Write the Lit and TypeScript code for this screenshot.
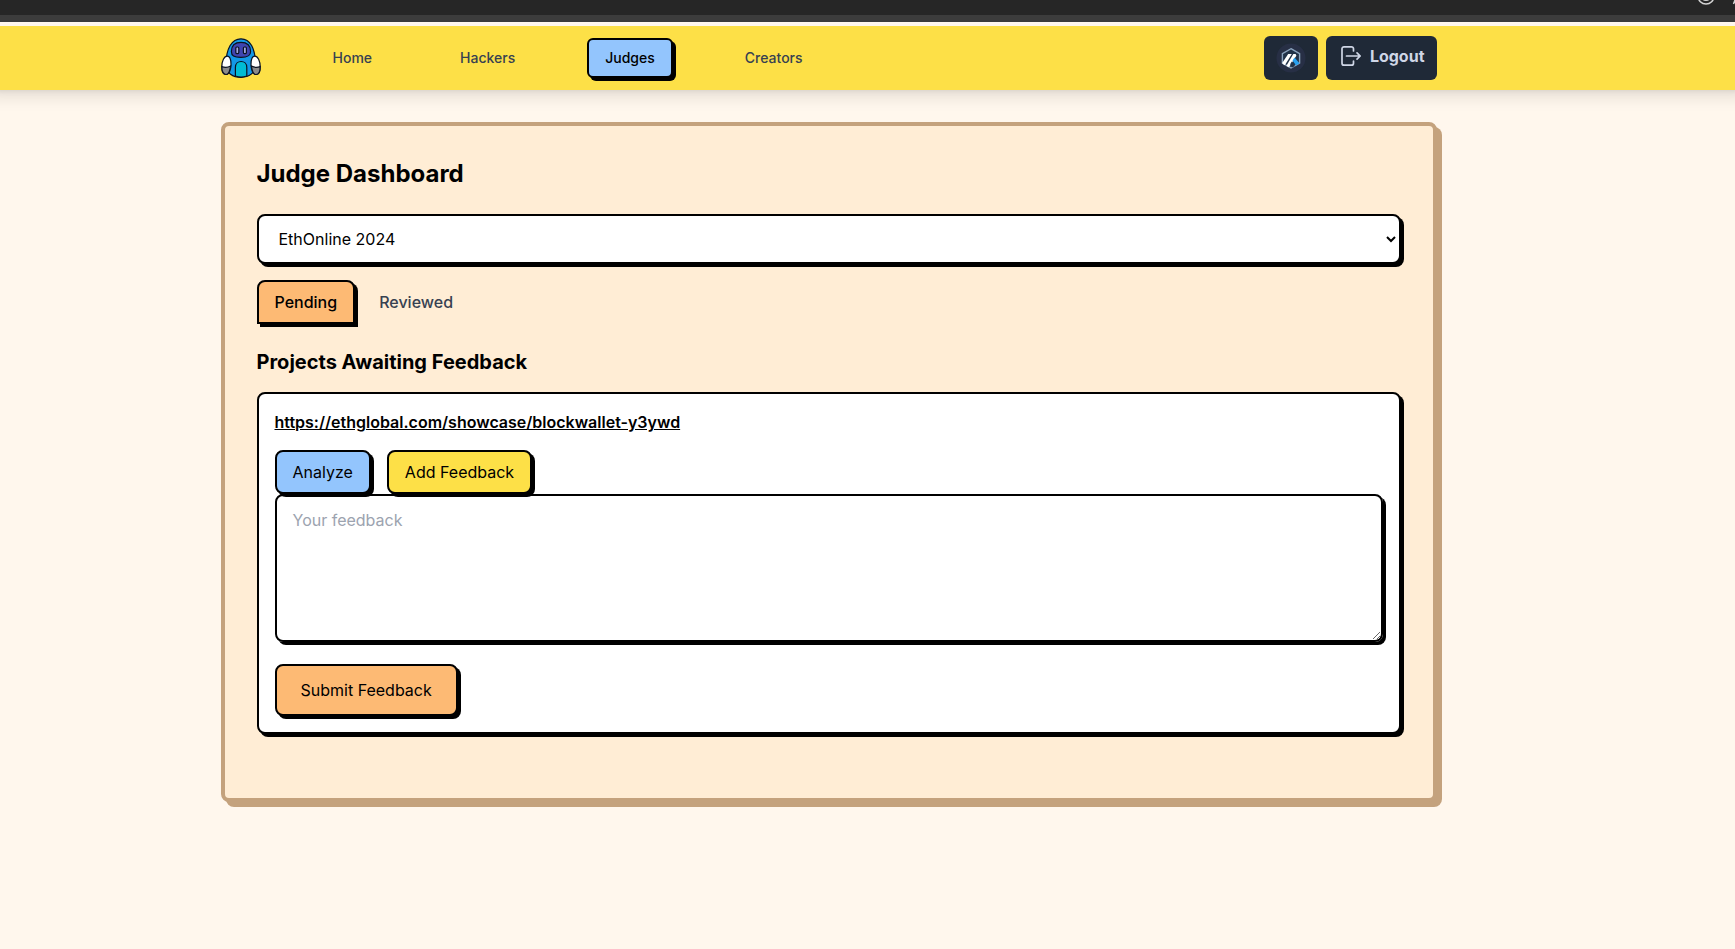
import { LitElement, html, css } from "lit";
import { customElement, state } from "lit/decorators.js";

type Tab = "pending" | "reviewed";

@customElement("site-header")
class SiteHeader extends LitElement {
  static styles = css`
    :host { display: block; }
    .bar {
      background: #fde047;
      box-shadow: 0 -5px 15px 12px rgba(0, 0, 0, 0.1), 0 -8px 6px 8px rgba(0, 0, 0, 0.1);
      clip-path: inset(0 0 -40px 0);
      padding-right: 78px;
    }
    .inner {
      box-sizing: border-box;
      max-width: 1216px;
      min-height: 64px;
      margin: 0 auto;
      display: flex;
      align-items: center;
      justify-content: space-between;
    }
    .left { display: flex; align-items: center; gap: 56px; }
    .logo { display: block; width: 40px; height: 40px; }
    .logo svg { display: block; }
    .link {
      box-sizing: border-box;
      height: 40px;
      display: flex;
      align-items: center;
      padding: 0 16px;
      border-radius: 6px;
      color: #374151;
      font-size: 14px;
      line-height: 20px;
      font-weight: 500;
      text-decoration: none;
    }
    .active {
      background: #93c5fd;
      border: 2px solid #000;
      box-shadow: 3px 3px 0 #000;
      color: #000;
    }
    .right { display: flex; gap: 8px; }
    .dark {
      height: 44px;
      display: flex;
      align-items: center;
      border: 0;
      border-radius: 6px;
      background: #1f2937;
      color: #cfd6e6;
      font: 700 16px/24px Inter, sans-serif;
      cursor: pointer;
    }
    .chain { padding: 0 12px; }
    .logout { padding: 0 12px 4px; gap: 8px; }
  `;

  render() {
    return html`
      <header class="bar">
        <div class="inner">
          <nav class="left">
            <a class="logo" href="#" aria-label="Start">
              <svg width="40" height="40" viewBox="0 0 40 40" stroke="#0b1220" stroke-width="1.2">
                <path d="M5 27C5 10 11 .8 20 .8S34.500 10 34.500 27C34.500 35 28 39.300 20 39.300S5 35 5 27Z" fill="#1398e6" />
                <path d="M14.400 38v-8.500c0-8 11.400-8 11.400 0V38c-3.600 1.300-7.800 1.300-11.400 0Z" fill="#00bcd4" />
                <path d="M10.400 13.500c0-6 3.600-9.200 9.600-9.200s9.600 3.200 9.600 9.200c0 4.400-2.600 5.900-9.600 5.900s-9.600-1.500-9.600-5.900Z" fill="#3f44b0" />
                <rect x="14.800" y="9" width="3" height="6.600" rx="1" fill="#a3a6e4" />
                <rect x="22.400" y="9" width="3" height="6.600" rx="1" fill="#a3a6e4" />
                <path d="M.8 29c0-6 2.400-10.800 5.400-10.800S10 22 10 26.500c0 5-2 10-5 10S.8 33.500.8 29Z" fill="#fff" />
                <path d="M39.200 29c0-6-2.400-10.800-5.400-10.800S30 22 30 26.500c0 5 2 10 5 10s4.200-3 4.200-7.500Z" fill="#fff" />
                <path d="M.8 28.500c3 1.200 6 1 8.800-.5-.6 4.500-2 8.500-4.600 8.500S.8 33.500.8 28.500Z" fill="#8b8b8b" />
                <path d="M39.200 28.500c-3 1.200-6 1-8.800-.5.6 4.500 2 8.500 4.600 8.500s4.200-3 4.200-8Z" fill="#8b8b8b" />
              </svg>
            </a>
            <a class="link" href="#">Home</a>
            <a class="link" href="#">Hackers</a>
            <a class="link active" href="#" aria-current="page">Judges</a>
            <a class="link" href="#">Creators</a>
          </nav>
          <div class="right">
            <button class="dark chain" aria-label="Arbitrum network">
              <svg width="30" height="30" viewBox="0 0 30 30">
                <circle cx="15" cy="15" r="14.500" fill="#272f45" />
                <path d="M15 5.700l8.600 4.900v9.400L15 24.900 6.400 20v-9.400Z" fill="#213147" stroke="#8ba3bd" stroke-width="1.400" />
                <path d="M6.500 19.500L12.200 11h3.600L8.800 22.200l-2.300-1.500Z" fill="#fff" />
                <path d="M10.300 23L17.300 11h2.300l.8 1.700L13 24.300Z" fill="#fff" />
                <path d="M16.500 17.500l2-3 5 5.700-3.400 2.200Z" fill="#28a0f0" />
                <path d="M15.700 18.500l3.300 4.600-3 1.500-1.800-3.300Z" fill="#213147" />
              </svg>
            </button>
            <button class="dark logout">
              <svg width="24" height="24" viewBox="0 0 24 24" fill="none" stroke="currentColor" stroke-width="1.700" stroke-linecap="round" stroke-linejoin="round">
                <path d="M15.500 7V4.800a2 2 0 0 0-2-2H6a2 2 0 0 0-2 2v14.400a2 2 0 0 0 2 2h7.500a2 2 0 0 0 2-2V17" />
                <path d="M8.500 12H22M19 8.800l3.200 3.200L19 15.200" />
              </svg>
              Logout
            </button>
          </div>
        </div>
      </header>
    `;
  }
}

@customElement("app-root")
class AppRoot extends LitElement {
  static styles = css`
    :host {
      display: block;
      min-height: 100vh;
      background: #fff7ed;
      color: #000;
      font: 400 16px/24px Inter, sans-serif;
    }
    .chrome {
      box-sizing: border-box;
      height: 22px;
      overflow: hidden;
      background: #262626;
      border-bottom: 7px solid #3c3c3c;
      display: flex;
      justify-content: flex-end;
    }
    .chrome svg { display: block; }
    .strip { height: 4px; background: #fff7ed; }
    .page { padding: 32px 78px 32px 0; }
    .panel {
      box-sizing: border-box;
      max-width: 1216px;
      margin: 0 auto;
      padding: 32px 32px 64px;
      background: #ffedd5;
      border: 4px solid #c4a27d;
      border-radius: 8px;
      box-shadow: 5px 5px 0 #c4a27d;
    }
    h1 { margin: 0 0 24px; font-size: 24px; line-height: 32px; font-weight: 700; }
    h2 { margin: 24px 0 16px; font-size: 20px; line-height: 28px; font-weight: 700; }
    .boxed {
      box-sizing: border-box;
      border: 2px solid #000;
      border-radius: 8px;
      box-shadow: 3px 3px 0 #000;
      background: #fff;
      color: #000;
      font: inherit;
    }
    .event { display: block; width: 100%; height: 50px; padding: 0 0 0 16px; }
    .tabs { display: flex; gap: 8px; margin-top: 16px; }
    .tab {
      height: 44px;
      padding: 0 16px;
      border: 0;
      background: none;
      color: #374151;
      font: inherit;
      font-weight: 500;
      cursor: pointer;
    }
    .tab.on {
      border: 2px solid #000;
      border-radius: 8px 8px 0 0;
      background: #fdba74;
      box-shadow: 3px 3px 0 #000;
      color: #000;
    }
    .card { padding: 16px; }
    .project { display: inline-block; color: #000; font-weight: 600; text-decoration: underline; }
    .actions { display: flex; gap: 16px; margin-top: 16px; }
    .small { height: 44px; padding: 0 16px; cursor: pointer; }
    .blue { background: #93c5fd; }
    .yellow { background: #fde047; }
    .feedback { display: block; width: 100%; height: 148px; padding: 12px 16px; background: transparent; resize: both; }
    .feedback::placeholder { color: #9ca3af; }
    .submit { display: block; height: 52px; margin-top: 22px; padding: 0 24px; background: #fdba74; cursor: pointer; }
  `;

  @state() private tab: Tab = "pending";

  render() {
    return html`
      <div class="chrome" aria-hidden="true">
        <svg width="50" height="15" viewBox="0 0 50 15" fill="none" stroke="#d4d4d4" stroke-width="1.500">
          <circle cx="21" cy="-4" r="8" />
          <path d="M17.500-1.500c1 2.300 6 2.300 7 0" />
          <path d="M50 0l-1.500 4" />
        </svg>
      </div>
      <div class="strip"></div>
      <site-header></site-header>
      <main class="page">
        <section class="panel">
          <h1>Judge Dashboard</h1>
          <select class="boxed event" aria-label="Hackathon">
            <option>EthOnline 2024</option>
          </select>
          <div class="tabs">
            <button class="tab ${this.tab === "pending" ? "on" : ""}" @click=${() => (this.tab = "pending")}>Pending</button>
            <button class="tab ${this.tab === "reviewed" ? "on" : ""}" @click=${() => (this.tab = "reviewed")}>Reviewed</button>
          </div>
          <h2>Projects Awaiting Feedback</h2>
          <article class="boxed card">
            <a class="project" href="https://ethglobal.com/showcase/blockwallet-y3ywd">https://ethglobal.com/showcase/blockwallet-y3ywd</a>
            <div class="actions">
              <button class="boxed small blue">Analyze</button>
              <button class="boxed small yellow">Add Feedback</button>
            </div>
            <textarea class="boxed feedback" placeholder="Your feedback" aria-label="Your feedback"></textarea>
            <button class="boxed submit">Submit Feedback</button>
          </article>
        </section>
      </main>
    `;
  }
}
